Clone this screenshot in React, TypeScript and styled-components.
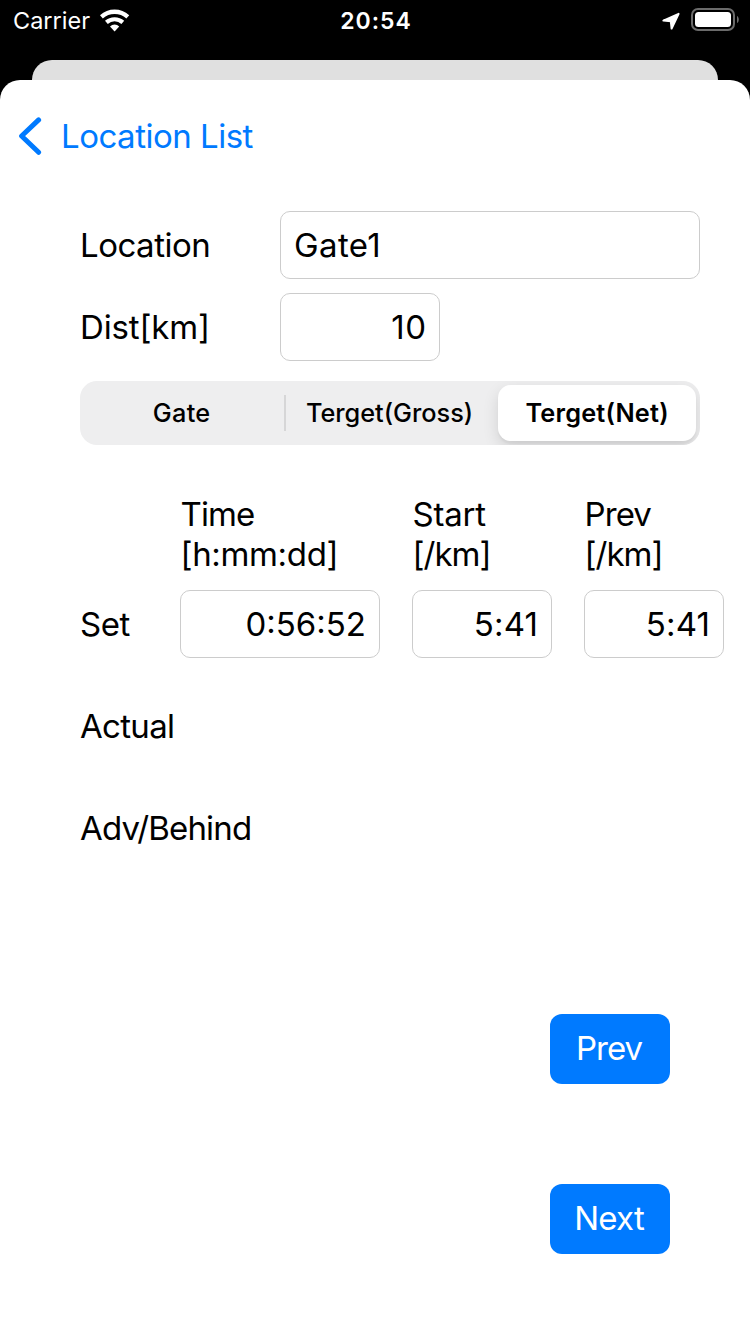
import React from 'react';
import styled, { createGlobalStyle } from 'styled-components';

const GlobalStyle = createGlobalStyle`
  body { margin: 0; background: #000; font-family: Inter, "Liberation Sans", sans-serif; font-size: 33px; color: #000; }
  * { box-sizing: border-box; }
`;

const Screen = styled.div`
  width: 750px; height: 1334px; display: flex; flex-direction: column; overflow: hidden; background: #000;
`;
const StatusBar = styled.header`
  height: 60px; padding: 0 10px 20px 13px; display: grid; grid-template-columns: 1fr auto 1fr;
  grid-template-rows: 40px; align-items: center; color: #fff; font-size: 23.5px; line-height: 38px;
`;
const StatusGroup = styled.div<{ $end?: boolean }>`
  display: flex; align-items: center; height: 40px; justify-content: ${p => (p.$end ? 'flex-end' : 'flex-start')};
`;
const Carrier = styled.div`width: 87px; padding-top: 2px;`;
const Clock = styled.div`font-weight: 560; font-size: 23px; padding-top: 2px; margin-right: 2px;`;
const Text = styled.span<{ $track?: number }>`
  letter-spacing: ${p => p.$track ?? 0}px; margin-right: ${p => -(p.$track ?? 0)}px; white-space: nowrap;
`;
const BackCard = styled.div`
  flex: none; height: 20px; margin: 0 32px; background: #e0e0e0; border-radius: 20px 20px 0 0;
`;
const Sheet = styled.main`
  flex: 1; background: #fff; border-radius: 20px 20px 0 0; display: flex; flex-direction: column;
`;
const NavBar = styled.nav`
  height: 112px; padding-left: 18px; display: flex; align-items: center; gap: 19px; color: #007aff;
`;
const Form = styled.section`
  margin-top: 19px; padding: 0 50px 0 80px; display: flex; flex-direction: column; gap: 14px;
`;
const FormRow = styled.div`display: grid; grid-template-columns: 200px 1fr; align-items: center; height: 68px;`;
const Field = styled.div<{ $width: number; $right?: boolean }>`
  width: ${p => p.$width}px; height: 68px; border: 1px solid #cccccc; border-radius: 10px; padding: 0 13px;
  display: flex; align-items: center; justify-content: ${p => (p.$right ? 'flex-end' : 'flex-start')};
`;
const Segmented = styled.div`
  margin: 20px 50px 0 80px; height: 64px; border-radius: 17px; background: #eeeeef; padding: 4px; overflow: hidden;
  display: grid; grid-template-columns: 200px 2px 1fr 198px; align-items: center; font-size: 25.3px;
`;
const Segment = styled.div<{ $active?: boolean }>`
  height: 56px; border-radius: 13px; display: flex; align-items: center; justify-content: center;
  padding: 0 ${p => (p.$active ? 0 : 5)}px 2px 0;
  font-weight: ${p => (p.$active ? 600 : 480)};
  ${p => p.$active && 'background: #fff; box-shadow: 0 6px 16px rgba(0,0,0,.12), 0 3px 2px rgba(0,0,0,.04);'}
`;
const Divider = styled.div`height: 36px; background: #d6d6d7;`;
const Times = styled.section`
  margin: 49px 0 0 80px; display: grid; grid-template-columns: 100px 232px 172px 140px;
  grid-template-rows: 80px 100px 104px 100px; align-items: center;
`;
const Heading = styled.div`display: flex; flex-direction: column; line-height: 40px; padding-left: 0.5px;`;
const Label = styled.div`white-space: nowrap;`;
const Actions = styled.footer`
  margin: 136px 80px 0 0; display: flex; flex-direction: column; align-items: flex-end; gap: 100px;
`;
const Button = styled.button`
  width: 120px; height: 70px; padding: 0 1px 3px 0; border: 0; border-radius: 12px; background: #007aff; color: #fff; font: inherit;
`;

const WifiIcon = () => (
  <svg width="30" height="23" viewBox="0 0 30 23" fill="none" stroke="#fff">
    <path d="M1.4 7.8A19.8 19.8 0 0 1 27.8 7.8" strokeWidth="4.3" />
    <path d="M6.4 13.4A12.2 12.2 0 0 1 22.8 13.4" strokeWidth="4.2" />
    <path d="M10 17.4A6.8 6.8 0 0 1 19.2 17.4L14.6 22.4Z" fill="#fff" stroke="none" />
  </svg>
);
const LocationIcon = () => (
  <svg width="18" height="19" viewBox="0 0 18 19" fill="#fff" stroke="#fff" strokeWidth="2" strokeLinejoin="round">
    <path d="M16.6 2.8L1.4 9.6L8.8 10.2L9.6 17.6Z" />
  </svg>
);
const Battery = styled.svg`margin-left: 11px;`;
const BatteryIcon = () => (
  <Battery width="49" height="24" viewBox="0 0 49 24">
    <rect x="1" y="1" width="42" height="21" rx="6" fill="none" stroke="#6b6b6b" strokeWidth="2" />
    <rect x="4" y="4" width="36" height="15" rx="3.5" fill="#fff" />
    <path d="M46 8C48.4 9 48.4 14 46 15Z" fill="#6b6b6b" />
  </Battery>
);
const BackIcon = () => (
  <svg width="24" height="38" viewBox="0 0 24 38" fill="none" stroke="#007aff" strokeWidth="5" strokeLinecap="round" strokeLinejoin="round">
    <path d="M20.6 2.9L3.6 19L20.6 35.3" />
  </svg>
);

const columns = [
  { title: 'Time', titleTrack: -0.9, unit: '[h:mm:dd]', unitTrack: -0.35, value: '0:56:52', track: 0, width: 200 },
  { title: 'Start', titleTrack: -0.2, unit: '[/km]', unitTrack: -1, value: '5:41', track: 0.2, width: 140 },
  { title: 'Prev', titleTrack: -0.9, unit: '[/km]', unitTrack: -1, value: '5:41', track: 0.2, width: 140 },
];

export default function App() {
  return (
    <Screen>
      <GlobalStyle />
      <StatusBar>
        <StatusGroup><Carrier><Text>Carrier</Text></Carrier><WifiIcon /></StatusGroup>
        <Clock><Text $track={1}>20:54</Text></Clock>
        <StatusGroup $end><LocationIcon /><BatteryIcon /></StatusGroup>
      </StatusBar>
      <BackCard />
      <Sheet>
        <NavBar><BackIcon /><Text $track={-0.5}>Location List</Text></NavBar>
        <Form>
          <FormRow><Label><Text $track={-0.5}>Location</Text></Label><Field $width={420}><Text $track={0.4}>Gate1</Text></Field></FormRow>
          <FormRow><Label><Text $track={-0.15}>Dist[km]</Text></Label><Field $width={160} $right><Text $track={0.5}>10</Text></Field></FormRow>
        </Form>
        <Segmented>
          <Segment><Text $track={0.3}>Gate</Text></Segment>
          <Divider />
          <Segment><Text>Terget(Gross)</Text></Segment>
          <Segment $active><Text $track={0.2}>Terget(Net)</Text></Segment>
        </Segmented>
        <Times>
          <span />
          {columns.map(c => (
            <Heading key={c.title}><Text $track={c.titleTrack}>{c.title}</Text><Text $track={c.unitTrack}>{c.unit}</Text></Heading>
          ))}
          <Label><Text $track={-0.4}>Set</Text></Label>
          {columns.map(c => <Field key={c.title} $width={c.width} $right><Text $track={c.track}>{c.value}</Text></Field>)}
          <Label><Text $track={-0.7}>Actual</Text></Label><span /><span /><span />
          <Label><Text $track={-0.85}>Adv/Behind</Text></Label>
        </Times>
        <Actions>
          <Button><Text $track={-1}>Prev</Text></Button>
          <Button><Text $track={-0.8}>Next</Text></Button>
        </Actions>
      </Sheet>
    </Screen>
  );
}
